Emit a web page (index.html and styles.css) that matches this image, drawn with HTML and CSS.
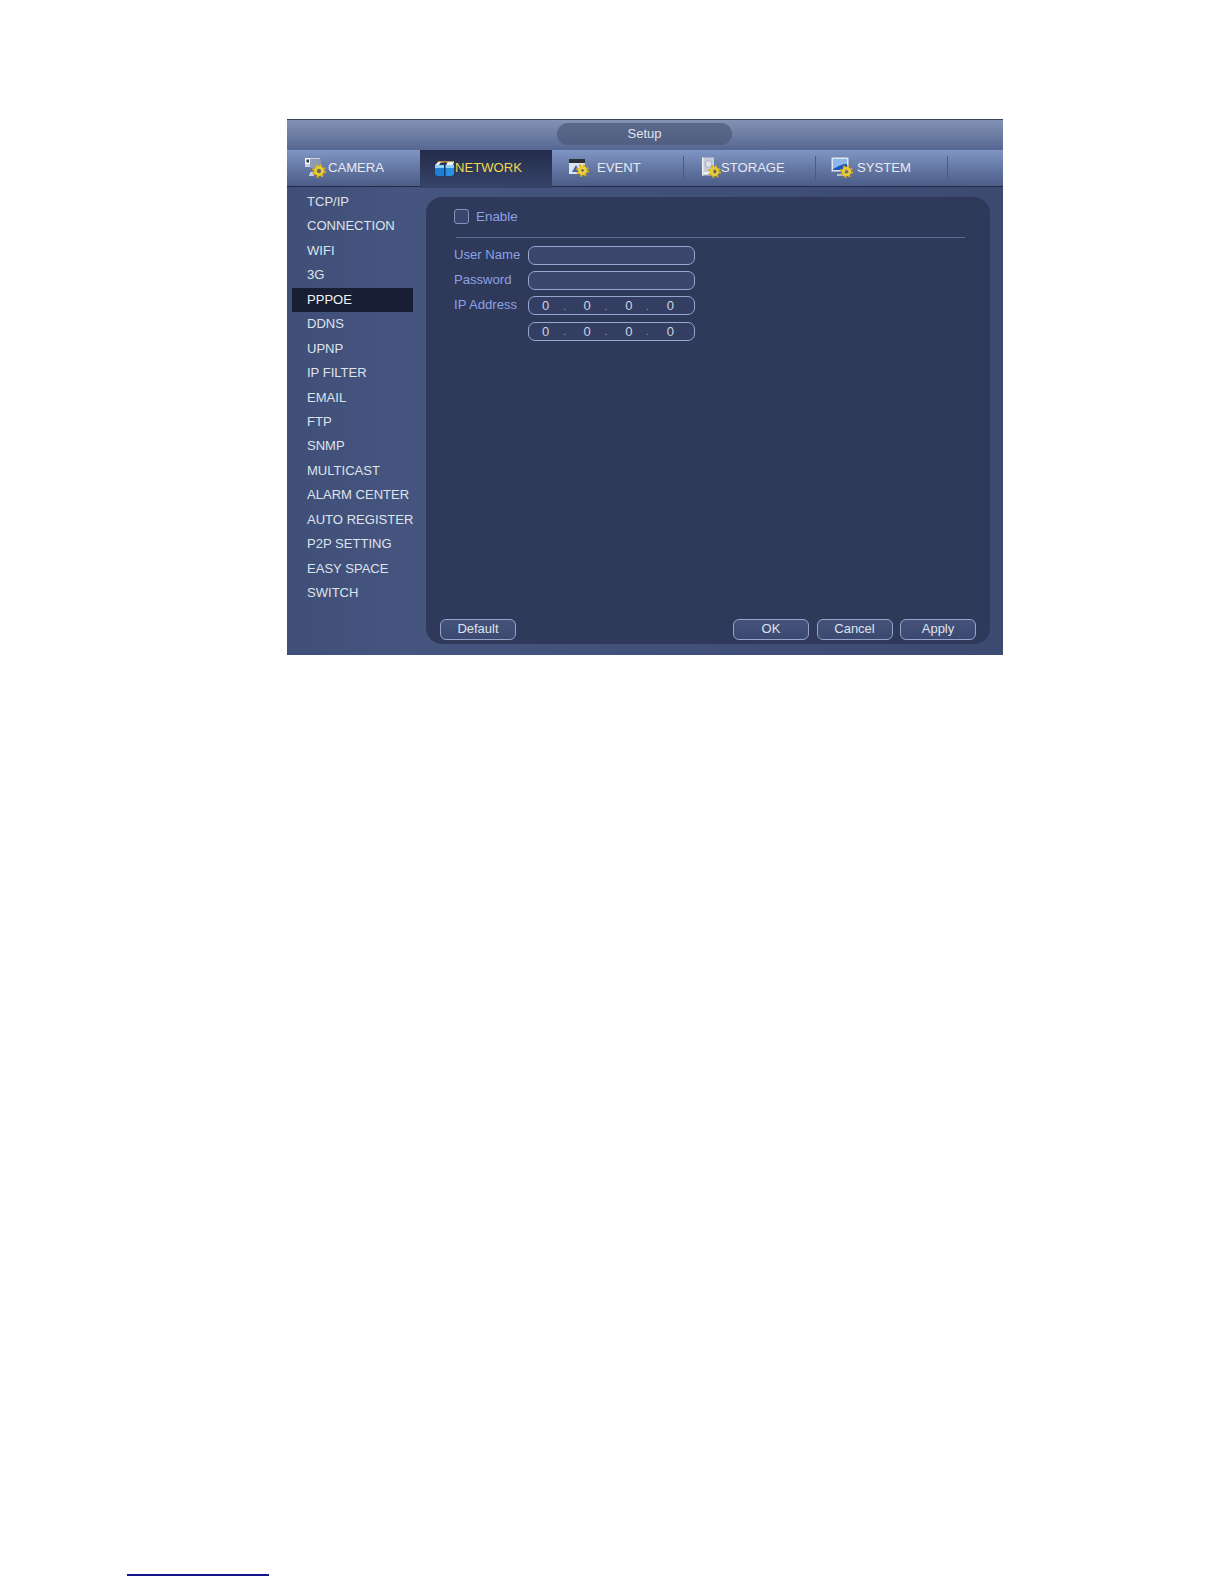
FILE: index.html

```html
<!DOCTYPE html>
<html lang="en">
<head>
    <meta charset="UTF-8">
    <meta name="viewport" content="width=device-width, initial-scale=1.0">
    <title>Setup</title>
    <link rel="stylesheet" href="styles.css">
</head>
<body>
    <svg class="defs" width="0" height="0">
        <symbol id="gear" viewBox="0 0 14 14">
            <circle cx="7" cy="7" r="5.6" fill="none" stroke="#d9a90f" stroke-width="2.6" stroke-dasharray="2.2 2.2"/>
            <circle cx="7" cy="7" r="3.6" fill="none" stroke="#eccb2a" stroke-width="2.8"/>
            <circle cx="7" cy="7" r="1.5" fill="#6d6a3a"/>
        </symbol>
    </svg>

    <div class="dialog">
        <div class="titlebar"><div class="title-pill">Setup</div></div>

        <div class="tabs">
            <div class="tab tab-camera">
                <svg class="icon" width="23" height="21" viewBox="0 0 23 21">
                    <rect x="1" y="1" width="15" height="9" fill="#c9d0dc"/>
                    <rect x="1" y="1" width="5" height="6" fill="#f4f5f7"/>
                    <rect x="2.5" y="2.5" width="2.5" height="3" fill="#2a3350"/>
                    <rect x="6" y="2" width="11" height="9" fill="#8d9ab4"/>
                    <path d="M6 16h6M5 18h5" stroke="#e3e7ef" stroke-width="1.4"/>
                    <use href="#gear" x="8" y="7" width="14" height="14"/>
                </svg>
                <span>CAMERA</span>
            </div>
            <div class="tab tab-network active">
                <svg class="icon" width="20" height="21" viewBox="0 0 20 21">
                    <path d="M3 5h16" stroke="#e8a93a" stroke-width="1.5"/>
                    <path d="M0 8l3-3h3L4 8zM13 5h6l-1 3h-7z" fill="#eef2f6"/>
                    <path d="M0 8h9v11H2l-2-2z" fill="#1f7fd6"/>
                    <path d="M10 8h9v9l-2 2h-7z" fill="#2a8fe0"/>
                    <path d="M0 8h9v3H0zM10 8h9v3h-9z" fill="#8fd0f5"/>
                    <path d="M9 5h1.6v15H9z" fill="#123a70"/>
                </svg>
                <span>NETWORK</span>
            </div>
            <div class="tab tab-event">
                <svg class="icon" width="21" height="21" viewBox="0 0 21 21">
                    <rect x="1" y="2" width="16" height="15" fill="#dfe3ea"/>
                    <rect x="1" y="2" width="16" height="4" fill="#2b2f38"/>
                    <path d="M4 15l4-7 4 7z" fill="#3f68b5"/>
                    <use href="#gear" x="8" y="7" width="13" height="13"/>
                </svg>
                <span>EVENT</span>
            </div>
            <div class="tab tab-storage">
                <svg class="icon" width="20" height="21" viewBox="0 0 20 21">
                    <rect x="1" y="0.5" width="12" height="18" fill="#c6ccd8"/>
                    <rect x="1" y="0.5" width="1.5" height="18" fill="#eef0f4"/>
                    <circle cx="7.5" cy="7" r="3.4" fill="#dde1e8" stroke="#aab2c2"/>
                    <rect x="3" y="15" width="9" height="2" fill="#f2f3f6"/>
                    <use href="#gear" x="7" y="8" width="13" height="13"/>
                </svg>
                <span>STORAGE</span>
            </div>
            <div class="tab tab-system">
                <svg class="icon" width="22" height="21" viewBox="0 0 22 21">
                    <rect x="0.5" y="0.5" width="17" height="14" fill="#dfe6f2"/>
                    <rect x="2" y="2" width="14" height="11" fill="#1c55b8"/>
                    <path d="M2 2h14v5c-5 0-8 2-14 5z" fill="#8db6ea"/>
                    <path d="M6 18h8" stroke="#e3e7ef" stroke-width="1.3"/>
                    <use href="#gear" x="9" y="8" width="13" height="13"/>
                </svg>
                <span>SYSTEM</span>
            </div>
        </div>

        <div class="main">
            <ul class="sidebar">
                <li>TCP/IP</li>
                <li>CONNECTION</li>
                <li>WIFI</li>
                <li>3G</li>
                <li class="selected">PPPOE</li>
                <li>DDNS</li>
                <li>UPNP</li>
                <li>IP FILTER</li>
                <li>EMAIL</li>
                <li>FTP</li>
                <li>SNMP</li>
                <li>MULTICAST</li>
                <li>ALARM CENTER</li>
                <li>AUTO REGISTER</li>
                <li>P2P SETTING</li>
                <li>EASY SPACE</li>
                <li>SWITCH</li>
            </ul>

            <div class="content">
                <div class="enable-row">
                    <span class="checkbox"></span>
                    <span class="label enable-label">Enable</span>
                </div>
                <div class="divider"></div>

                <div class="form">
                    <div class="form-row">
                        <span class="label field-label">User Name</span>
                        <div class="field"></div>
                    </div>
                    <div class="form-row">
                        <span class="label field-label">Password</span>
                        <div class="field"></div>
                    </div>
                    <div class="form-row">
                        <span class="label field-label">IP Address</span>
                        <div class="field ip"><span>0</span><i>.</i><span>0</span><i>.</i><span>0</span><i>.</i><span>0</span></div>
                    </div>
                    <div class="form-row">
                        <span class="field-label"></span>
                        <div class="field ip"><span>0</span><i>.</i><span>0</span><i>.</i><span>0</span><i>.</i><span>0</span></div>
                    </div>
                </div>

                <div class="buttons">
                    <div class="btn">Default</div>
                    <div class="btn-group">
                        <div class="btn">OK</div>
                        <div class="btn">Cancel</div>
                        <div class="btn">Apply</div>
                    </div>
                </div>
            </div>
        </div>
    </div>

    <div class="footnote-rule"></div>
</body>
</html>
```

FILE: styles.css

```css
html, body { margin: 0; padding: 0; background: #fff; }
body { width: 1224px; height: 1584px; padding-top: 119px; box-sizing: border-box; font-family: "Liberation Sans", Arial, sans-serif; font-size: 13px; overflow: hidden; }
.defs { position: absolute; }

.dialog { margin-left: 287px; width: 716px; height: 536px; display: flex; flex-direction: column; background: linear-gradient(90deg, #3f4f78, #45557f 120px, #3c4a72); }

.titlebar { height: 31px; box-sizing: border-box; border-top: 1px solid #3b4560; padding-top: 3px; display: flex; justify-content: center; background: linear-gradient(180deg, #8292b4, #7686aa 30%, #556792); }
.title-pill { width: 175px; height: 22px; margin-left: -1px; border-radius: 11px; background: linear-gradient(180deg, #5a6888, #4f5e82); color: #dfe3ea; text-align: center; line-height: 21px; }

.tabs { height: 36px; display: flex; border-bottom: 1px solid #232b45; background: linear-gradient(180deg, #7f95c3, #4b5c87); position: relative; }
.tab { width: 132px; display: flex; align-items: center; color: #e6eaf2; font-size: 13.1px; position: relative; padding-bottom: 1px; box-sizing: border-box; }
.tab-camera { width: 133px; padding-left: 17px; gap: 1px; }
.tab-network { padding-left: 15px; }
.tab-event { padding-left: 16px; gap: 8px; }
.tab-storage { padding-left: 17px; gap: 0; }
.tab-system { padding-left: 15px; gap: 4px; }
.tab::after { content: ""; position: absolute; right: 0; top: 6px; bottom: 6px; width: 1px; background: #4c5c84; }
.tab.active { color: #f0d84e; background: linear-gradient(180deg, #232c4a, #37446a); height: 38px; padding-bottom: 3px; }
.tab.active::after, .tab-camera::after { display: none; }
.icon { flex: none; }

.main { flex: 1; display: flex; min-height: 0; }

.sidebar { list-style: none; margin: 0; padding: 3px 0 0 5px; width: 134px; box-sizing: border-box; flex: none; }
.sidebar li { height: 24.44px; line-height: 24px; padding-left: 15px; width: 121px; box-sizing: border-box; color: #dfe3ec; font-size: 13.05px; white-space: nowrap; }
.sidebar li.selected { background: #181e33; color: #f3f4f7; }

.content { margin: 10px 0 11px 5px; width: 564px; border-radius: 16px; background: #2f3959; display: flex; flex-direction: column; padding: 0 14px 4px; box-sizing: border-box; }
.label { color: #8ea1e4; }
.enable-label { font-size: 13.4px; }

.enable-row { display: flex; align-items: center; gap: 7px; margin: 12px 0 0 14px; height: 15px; }
.checkbox { width: 13px; height: 13px; border: 1px solid #8494bd; border-radius: 3px; background: #3a466c; }
.divider { height: 1px; margin: 13px 11px 0 16px; background: #5f6b92; }

.form { display: flex; flex-direction: column; gap: 6.2px; margin: 8px 0 0 14px; }
.form-row { display: flex; align-items: center; height: 19px; }
.field-label { width: 74px; margin-top: -3px; flex: none; font-size: 13.1px; }
.field { width: 167px; height: 19px; box-sizing: border-box; border: 1px solid #98a7d0; border-radius: 7px; background: #3a466b; color: #cfd5e2; }
.ip { display: flex; justify-content: space-between; align-items: center; padding: 0 20px 0 13px; background: #333e62; }
.ip i { font-style: normal; color: #8d9abc; font-size: 11px; margin-right: 4px; }

.buttons { margin-top: auto; display: flex; justify-content: space-between; }
.btn-group { display: flex; gap: 7.5px; }
.btn { width: 76px; height: 21px; box-sizing: border-box; border: 1px solid #95a4cc; border-radius: 6px; background: linear-gradient(180deg, #45537b, #3b4870); color: #dfe3ec; text-align: center; line-height: 18px; }

.footnote-rule { margin: 919px 0 0 127px; width: 142px; height: 2px; background: #14148c; }
```
